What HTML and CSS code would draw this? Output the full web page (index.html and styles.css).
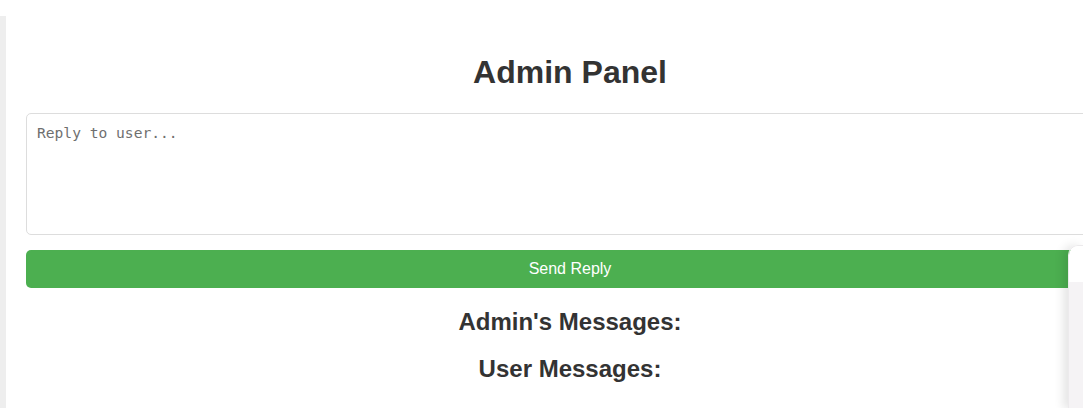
FILE: index.html
```html
<!DOCTYPE html>
<html>
<head>
<meta charset="utf-8">
<title>Admin Panel</title>
<link rel="stylesheet" href="styles.css">
</head>
<body>
<div class="page">
  <div class="rail"></div>
  <main class="panel">
    <h1 class="title">Admin Panel</h1>
    <textarea class="reply" placeholder="Reply to user..."></textarea>
    <button class="send">Send Reply</button>
    <h2 class="section">Admin's Messages:</h2>
    <h2 class="section">User Messages:</h2>
  </main>
</div>
<div class="widget">
  <div class="widget-head"></div>
  <div class="widget-body"></div>
</div>
</body>
</html>
```

FILE: styles.css
```css
html, body {
  margin: 0;
  padding: 0;
  overflow: hidden;
  background: #ffffff;
  font-family: "Liberation Sans", Arial, sans-serif;
  color: #333333;
}

.page {
  display: flex;
  align-items: flex-start;
  padding-top: 16px;
  width: 1200px;
  height: 392px;
  overflow: hidden;
}

.rail {
  width: 6px;
  align-self: stretch;
  background: #eeeeee;
  flex: none;
}

.panel {
  width: 1088px;
  padding: 16px 20px 0 20px;
  flex: none;
}

.title {
  font-size: 32px;
  font-weight: bold;
  text-align: center;
  margin: 21.5px 0 22.5px 0;
  color: #333333;
}

.reply {
  display: block;
  box-sizing: border-box;
  width: 100%;
  height: 122px;
  padding: 10px;
  border: 1px solid #dddddd;
  border-radius: 5px;
  font-family: "DejaVu Sans Mono", "Liberation Mono", monospace;
  font-size: 14.6px;
  resize: none;
  margin: 0 0 15px 0;
  color: #333;
}

.reply::placeholder {
  color: #6f6f6f;
}

.send {
  display: block;
  width: 100%;
  box-sizing: border-box;
  padding: 10px;
  border: none;
  border-radius: 5px;
  background: #4caf50;
  color: #ffffff;
  font-family: "Liberation Sans", Arial, sans-serif;
  font-size: 16px;
  line-height: 18.4px;
}

.section {
  font-size: 24px;
  font-weight: bold;
  text-align: center;
  margin: 19.5px 0;
  color: #333333;
}

.widget {
  position: absolute;
  left: 1068px;
  top: 245px;
  width: 15px;
  height: 163px;
  border-top-left-radius: 10px;
  overflow: hidden;
  box-shadow: -5px 0 10px rgba(0, 0, 0, 0.1);
  border-left: 1px solid #eceaec;
  border-top: 1px solid #eceaec;
  display: flex;
  flex-direction: column;
}

.widget-head {
  height: 36px;
  background: #ffffff;
}

.widget-body {
  flex: 1;
  background: #f5f3f5;
}
```
